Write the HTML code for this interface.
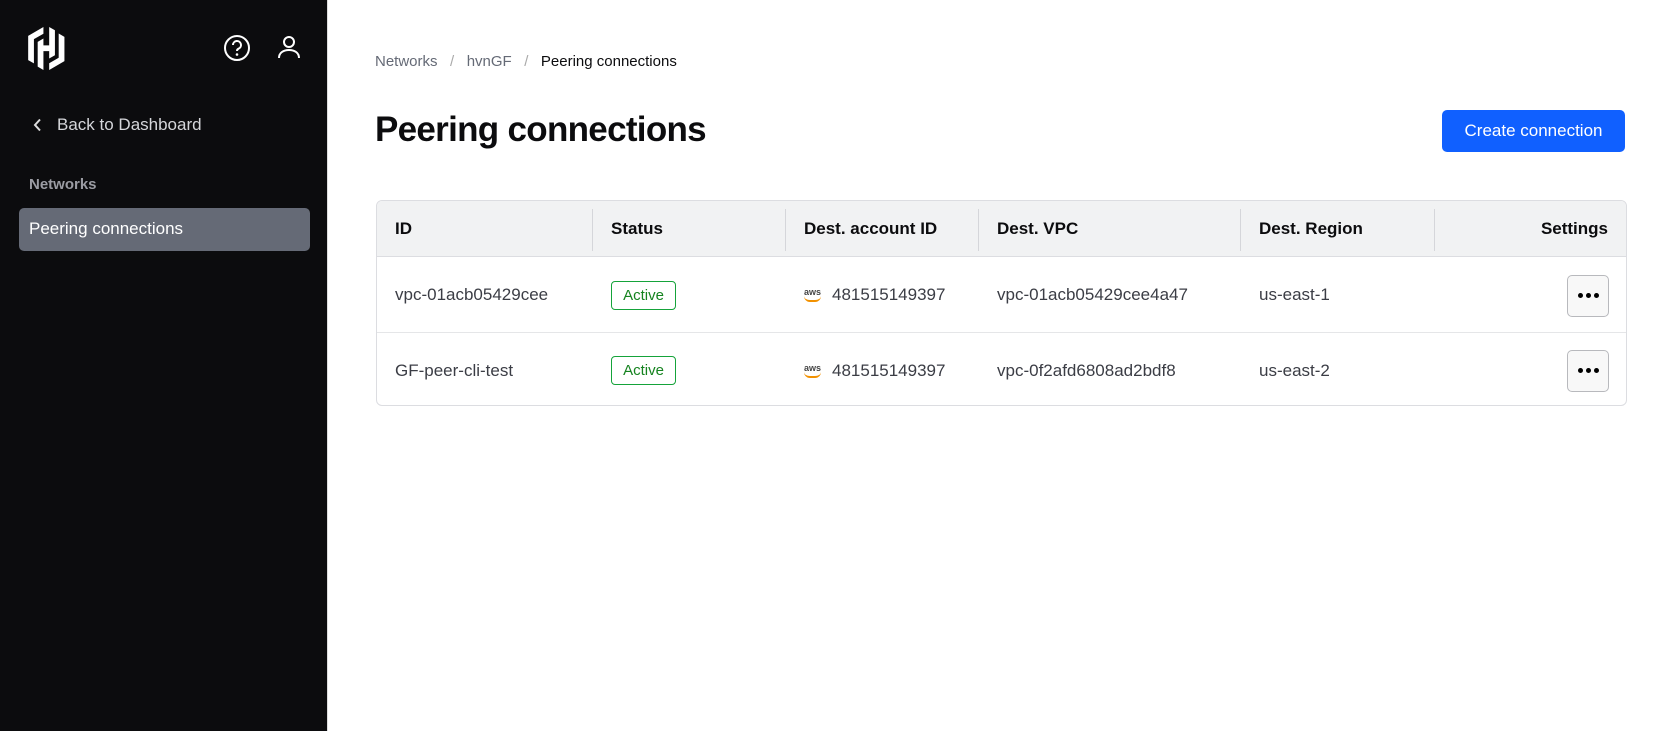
<!DOCTYPE html>
<html><head><meta charset="utf-8"><style>
*{box-sizing:border-box;margin:0;padding:0}
body{width:1672px;height:731px;overflow:hidden;background:#fff;font-family:"Liberation Sans",sans-serif;position:relative}
.sb{position:absolute;left:0;top:0;width:328px;height:731px;background:#0c0c0e;border-right:1px solid #ddd}
.a{position:absolute;white-space:nowrap}
.tbl{position:absolute;left:376px;top:200px;width:1251px;height:206px;border:1px solid #dcdde1;border-radius:6px;overflow:hidden}
.hd{position:absolute;left:0;top:0;width:100%;height:56px;background:#f1f2f3;border-bottom:1px solid #dcdde1}
.sep{position:absolute;top:8px;width:1px;height:42px;background:#d5d6da}
.th{position:absolute;top:18px;font-size:17px;font-weight:bold;color:#0c0c0e}
.td{position:absolute;font-size:17px;color:#3b3d45}
.badge{position:absolute;width:65px;height:29px;border:1px solid #15a33a;border-radius:4px;color:#15831f;font-size:15px;text-align:center;line-height:27px}
.dots{position:absolute;left:1190px;width:42px;height:42px;border:1px solid #b8b9bd;border-radius:5px;background:#f8f8f8}
.dots i{position:absolute;top:17px;width:5px;height:5px;border-radius:50%;background:#000}
.aws{position:absolute;font-size:9px;color:#444;font-weight:bold}
.aws:after{content:"";position:absolute;left:0;top:9px;width:17px;height:4px;border-bottom:2px solid #f29100;border-radius:0 0 10px 10px}
</style></head><body>
<div class="sb">
<svg class="a" style="left:28px;top:27px" width="37" height="43" viewBox="0 0 37 43.4"><path fill="#fff" d="M15.4 0 L0 8.9 V33.4 L5.8 36.7 V12.3 L15.4 6.8Z M21.2 43.4 L36.6 34.5 V10 L30.8 6.6 V31 L21.2 36.6Z M21.2 0 L27 3.3 V28.5 L21.2 31.8 V24.3 H15.4 V43.4 L9.6 40 V15 L15.4 11.6 V18.6 H21.2Z"/></svg>
<svg class="a" style="left:223px;top:34px" width="28" height="28" viewBox="0 0 28 28"><circle cx="14" cy="14" r="12" fill="none" stroke="#fff" stroke-width="2"/><path d="M10 11a4 4 0 1 1 5.5 3.7c-1 .5-1.5 1.2-1.5 2.3" fill="none" stroke="#fff" stroke-width="2"/><circle cx="14" cy="20.5" r="1.3" fill="#fff"/></svg>
<svg class="a" style="left:276px;top:34px" width="26" height="26" viewBox="0 0 26 26"><circle cx="13" cy="8" r="5" fill="none" stroke="#fff" stroke-width="2"/><path d="M3 24c0-5 4-8 10-8s10 3 10 8" fill="none" stroke="#fff" stroke-width="2"/></svg>
<svg class="a" style="left:33px;top:118px" width="10" height="14" viewBox="0 0 10 14"><path d="M7 1.5 L2 7 L7 12.5" fill="none" stroke="#ddd" stroke-width="2"/></svg>
<div class="a" style="left:57px;top:115px;color:#d5d6da;font-size:17px">Back to Dashboard</div>
<div class="a" style="left:29px;top:176px;color:#9b9ca3;font-size:15px;font-weight:bold">Networks</div>
<div class="a" style="left:19px;top:208px;width:291px;height:43px;background:#656a76;border-radius:5px"></div>
<div class="a" style="left:29px;top:219px;color:#fff;font-size:17px">Peering connections</div>
</div>
<div class="a" style="left:375px;top:53px;font-size:15px;color:#656a76">Networks &nbsp;&nbsp;<span style="color:#aaa">/</span>&nbsp;&nbsp; hvnGF &nbsp;&nbsp;<span style="color:#aaa">/</span>&nbsp;&nbsp; <span style="color:#0c0c0e">Peering connections</span></div>
<div class="a" style="left:375px;top:110px;font-size:35px;font-weight:bold;color:#0c0c0e;letter-spacing:-0.7px">Peering connections</div>
<div class="a" style="left:1442px;top:110px;width:183px;height:42px;background:#1060ff;border-radius:5px;color:#fff;font-size:17px;text-align:center;line-height:42px">Create connection</div>
<div class="tbl">
<div class="hd"></div>
<div class="sep" style="left:215px"></div><div class="sep" style="left:408px"></div><div class="sep" style="left:601px"></div><div class="sep" style="left:863px"></div><div class="sep" style="left:1057px"></div>
<div class="th" style="left:18px">ID</div><div class="th" style="left:234px">Status</div><div class="th" style="left:427px">Dest. account ID</div><div class="th" style="left:620px">Dest. VPC</div><div class="th" style="left:882px">Dest. Region</div><div class="th" style="right:18px">Settings</div>
<div style="position:absolute;left:0;top:131px;width:100%;height:1px;background:#e5e6e8"></div>
<div class="td" style="left:18px;top:84px">vpc-01acb05429cee</div>
<div class="badge" style="left:234px;top:80px">Active</div>
<div class="aws" style="left:427px;top:86px">aws</div>
<div class="td" style="left:455px;top:84px">481515149397</div>
<div class="td" style="left:620px;top:84px">vpc-01acb05429cee4a47</div>
<div class="td" style="left:882px;top:84px">us-east-1</div>
<div class="dots" style="top:74px"><i style="left:10px"></i><i style="left:18px"></i><i style="left:26px"></i></div>
<div class="td" style="left:18px;top:160px">GF-peer-cli-test</div>
<div class="badge" style="left:234px;top:155px">Active</div>
<div class="aws" style="left:427px;top:162px">aws</div>
<div class="td" style="left:455px;top:160px">481515149397</div>
<div class="td" style="left:620px;top:160px">vpc-0f2afd6808ad2bdf8</div>
<div class="td" style="left:882px;top:160px">us-east-2</div>
<div class="dots" style="top:149px"><i style="left:10px"></i><i style="left:18px"></i><i style="left:26px"></i></div>
</div>
</body></html>
